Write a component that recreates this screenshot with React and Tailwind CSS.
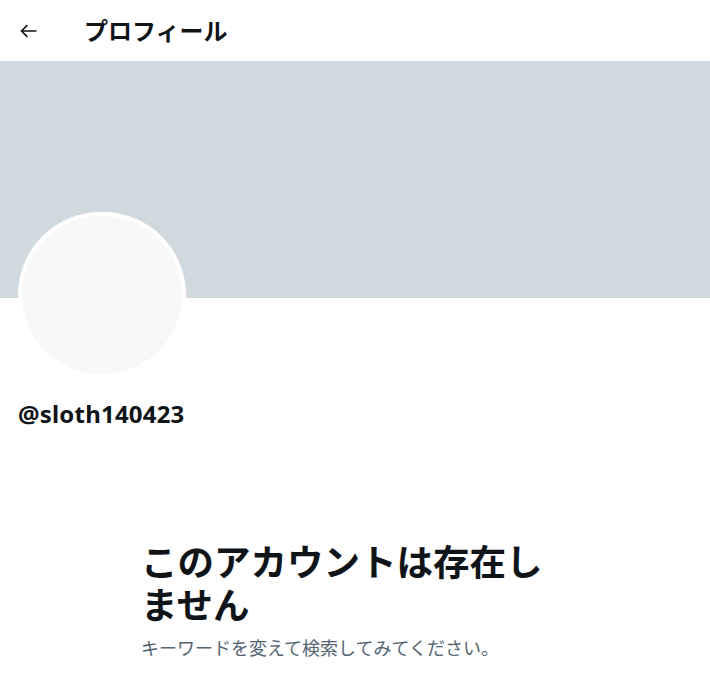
export default function App() {
  return (
    <div
      className="w-[710px] h-[690px] bg-white overflow-hidden text-[#0f1419]"
      style={{ fontFamily: '"Noto Sans", "Noto Sans CJK JP", sans-serif' }}
    >
      {/* Header */}
      <div className="h-[61px] flex items-center">
        <div className="w-[84px] pl-[19px] flex items-center">
          <svg width="20" height="20" viewBox="0 0 24 24" fill="none" stroke="#0f1419" strokeWidth="2">
            <path d="M21 12H4M10 5l-7 7 7 7" />
          </svg>
        </div>
        <h1 className="text-[24px] font-bold leading-none">プロフィール</h1>
      </div>

      {/* Banner */}
      <div className="h-[237px] bg-[#cfd9de]" />

      {/* Avatar + handle */}
      <div className="pl-[18px]">
        <div className="-mt-[86px] w-[168px] h-[166px] rounded-full border-4 border-white bg-[#f7f9f9]" />
        <p className="mt-[21px] text-[24px] font-bold leading-[30px] tracking-[0.2px]">@sloth140423</p>
      </div>

      {/* Empty state */}
      <div className="ml-[141px] mt-[112px] w-[410px]">
        <h2 className="text-[36.5px] font-bold leading-[43px]">このアカウントは存在しません</h2>
        <p className="mt-[10px] text-[18px] leading-[22px] text-[#536471]">
          キーワードを変えて検索してみてください。
        </p>
      </div>
    </div>
  );
}
